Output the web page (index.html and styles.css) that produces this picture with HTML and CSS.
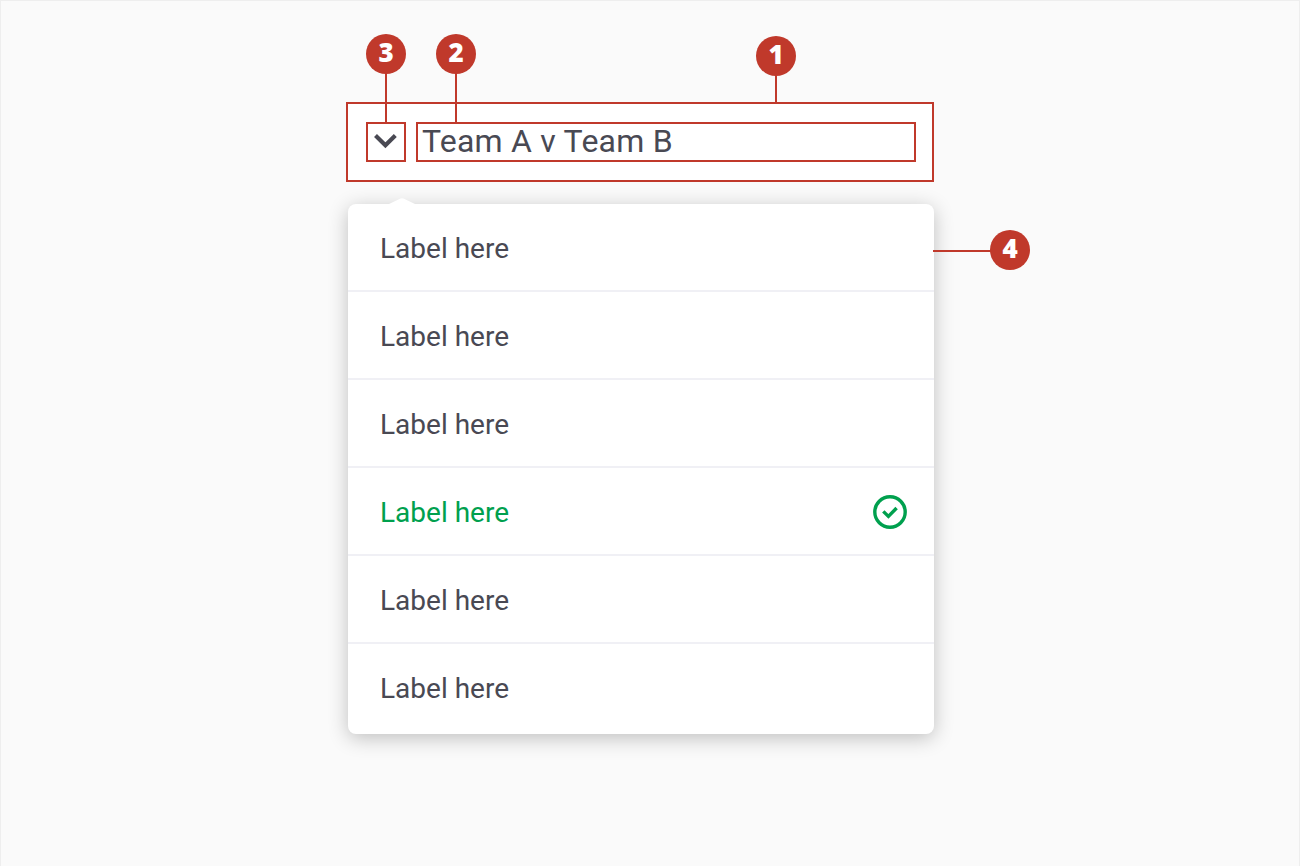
FILE: index.html
```html
<!DOCTYPE html>
<html lang="en">
<head>
<meta charset="utf-8">
<title>Dropdown anatomy</title>
<link rel="stylesheet" href="styles.css">
</head>
<body>
<main class="stage">
  <div class="component">
    <header class="selector">
      <div class="chevron-box">
        <svg class="chevron" viewBox="0 0 36 36"><path d="M7.5 11.6 L17.4 21.2 L27.3 11.6"/></svg>
        <span class="marker marker-up marker-chevron">3</span>
      </div>
      <div class="title-box">
        <span class="title">Team A v Team B</span>
        <span class="marker marker-up marker-title">2</span>
      </div>
      <span class="marker marker-up marker-selector">1</span>
    </header>
    <div class="menu">
      <svg class="menu-tip" viewBox="0 0 28 7"><path d="M0 6.6 L1 6 L12.5 0.6 Q14 -0.1 15.5 0.6 L27 6 L28 6.6Z"/></svg>
      <ul class="options">
        <li class="option">Label here</li>
        <li class="option">Label here</li>
        <li class="option">Label here</li>
        <li class="option selected">Label here
          <svg class="check" viewBox="0 0 34 34"><circle cx="17" cy="17" r="15.2"/><path d="M10.3 16.4 L15.4 21.4 L23.6 13"/></svg>
        </li>
        <li class="option">Label here</li>
        <li class="option">Label here</li>
      </ul>
      <span class="marker marker-side">4</span>
    </div>
  </div>
</main>
</body>
</html>
```

FILE: styles.css
```css
* { box-sizing: border-box; }

body {
  margin: 0;
  background: #fafafa;
  color: #494953;
  font-family: Roboto, sans-serif;
}

.stage {
  height: 866px;
  padding: 101px 0 0 345px;
  border: 1px solid #eeeeee;
  border-bottom: 0;
  overflow: hidden;
}

.component { width: 588px; }

.selector {
  position: relative;
  display: flex;
  gap: 10px;
  height: 80px;
  padding: 18px 16px 18px 18px;
  border: 2px solid #c0392b;
  background: #fff;
}

.chevron-box,
.title-box {
  position: relative;
  height: 40px;
  border: 2px solid #c0392b;
}

.chevron-box { width: 40px; }
.title-box { flex: 1; padding-left: 4px; }

.chevron {
  display: block;
  width: 36px;
  height: 36px;
  fill: none;
  stroke: #494953;
  stroke-width: 4.2;
}

.title {
  display: block;
  font-size: 32px;
  line-height: 34px;
  letter-spacing: 0.23px;
  white-space: nowrap;
}

.menu {
  position: relative;
  width: 586px;
  height: 530px;
  margin: 22px 0 0 2px;
  border-radius: 8px;
  background: #fff;
  box-shadow: 0 4px 20px rgba(0, 0, 0, 0.24);
}

.menu-tip {
  position: absolute;
  top: -6px;
  left: 40px;
  width: 28px;
  height: 7px;
  fill: #fff;
}

.options {
  margin: 0;
  padding: 0;
  list-style: none;
}

.option {
  display: flex;
  align-items: center;
  justify-content: space-between;
  height: 88px;
  padding: 2px 27px 0 32px;
  border-bottom: 2px solid #f0f0f5;
  font-size: 28px;
}

.option:last-child { border-bottom: 0; padding-bottom: 2px; }
.selected { color: #00a04e; }

.check {
  width: 34px;
  height: 34px;
  fill: none;
  stroke: #00a04e;
  stroke-width: 3.4;
}

.marker {
  position: absolute;
  width: 40px;
  height: 40px;
  border-radius: 50%;
  background: #c0392b;
  color: #fff;
  font: 800 26px/36px "Open Sans", sans-serif;
  text-align: center;
}

.marker::after {
  content: "";
  position: absolute;
  background: #c0392b;
}

.marker-up::after {
  top: 39px;
  left: 19px;
  width: 2px;
  height: 50px;
}

.marker-chevron { top: -90px; left: -2px; }
.marker-title { top: -90px; left: 18px; }
.marker-selector { top: -68px; left: 408px; }
.marker-selector::after { height: 28px; }
.marker-side { top: 26px; left: 642px; }
.marker-side::after { top: 20px; right: 39px; width: 58px; height: 2px; }
```
